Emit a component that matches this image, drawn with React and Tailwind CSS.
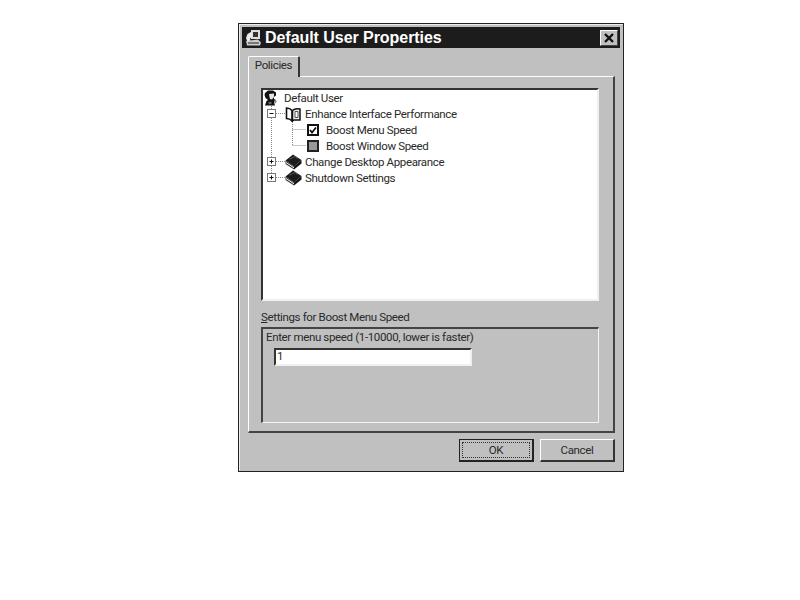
// App.jsx
const DOT = '#8a8a8a';

function UserIcon() {
  return (
    <svg width="15" height="16" viewBox="0 0 15 16" className="shrink-0">
      <path d="M2 3 L5 0.5 L10 0.5 L13 2.5 L13 5.5 L11 7 L11 9 L13 10 L11 12 L12 15.5 L2 15.5 L3.5 11 L5 10 L2.5 8 L1.5 5 Z" fill="#111" />
      <path d="M6 4 L11 3.5 L11 7 L9 9.5 L7 9 L6.5 7 Z" fill="#e4e4e4" />
      <path d="M11.5 10 L14 11 L12.5 13.5 L11 12 Z" fill="#888" />
      <path d="M5 12.5 L8 11.5 L9 13.5 L6 14.5 Z" fill="#666" />
    </svg>
  );
}

function OpenBook() {
  return (
    <svg width="16" height="15" viewBox="0 0 16 15" className="shrink-0">
      <path d="M1.5 1 Q5 1 7 3.5 L7 14 Q5 11.5 1.5 11.5 Z" fill="#fff" stroke="#111" strokeWidth="1.6" />
      <path d="M7.5 3.5 Q10 1 15 2 L15 13 L9 13 L7.5 14 Z" fill="#eee" stroke="#111" strokeWidth="1.5" />
      <path d="M10 4.5 L13 4.5 L13 10.5 L10 10.5 Z" fill="#fff" stroke="#555" strokeWidth="1" />
    </svg>
  );
}

function ClosedBook() {
  return (
    <svg width="17" height="16" viewBox="0 0 17 16" className="shrink-0">
      <path d="M0.5 6.5 L8 0.5 L16.5 6 L9 12.5 Z" fill="#1c1c1c" />
      <path d="M0.5 6.5 L9 12.5 L9 15.5 L0.5 10 Z" fill="#3a3a3a" />
      <path d="M9 12.5 L16.5 6 L16.5 9.5 L9 15.5 Z" fill="#111" />
      <path d="M1 8.5 L9 13.8" stroke="#f0f0f0" strokeWidth="1" />
      <path d="M4.5 5 L10 2.5 L12.5 4.5" stroke="#666" strokeWidth="0.8" fill="none" />
    </svg>
  );
}

function CheckedBox() {
  return (
    <svg width="12" height="12" viewBox="0 0 12 12" className="shrink-0">
      <rect x="1" y="1" width="10" height="10" fill="#fff" stroke="#111" strokeWidth="2" />
      <path d="M3 6 L5 8.5 L9 3.5" fill="none" stroke="#111" strokeWidth="1.8" />
    </svg>
  );
}

function GrayBox() {
  return (
    <svg width="12" height="12" viewBox="0 0 12 12" className="shrink-0">
      <rect x="1" y="1" width="10" height="10" fill="#999" stroke="#222" strokeWidth="2" />
    </svg>
  );
}

function Expander({ open }) {
  return (
    <g>
      <rect x="0.5" y="3.5" width="8" height="8" fill="#fff" stroke="#777" />
      <path d="M2.5 7.5 H6.5" stroke="#111" />
      {!open && <path d="M4.5 5.5 V9.5" stroke="#111" />}
    </g>
  );
}

// connector for the rows that hang off the root
function RootGutter({ open, last }) {
  return (
    <svg width="18" height="16" viewBox="0 0 18 16" className="shrink-0">
      <path d="M4.5 0 V3" stroke={DOT} strokeDasharray="1 1" />
      {!last && <path d="M4.5 12 V16" stroke={DOT} strokeDasharray="1 1" />}
      <path d="M9 7.5 H18" stroke={DOT} strokeDasharray="1 1" />
      <Expander open={open} />
    </svg>
  );
}

// connector for the children of the open book
function ChildGutter({ last }) {
  return (
    <svg width="40" height="16" viewBox="0 0 40 16" className="shrink-0">
      <path d="M4.5 0 V16" stroke={DOT} strokeDasharray="1 1" />
      <path d={last ? 'M25.5 0 V7.5' : 'M25.5 0 V16'} stroke={DOT} strokeDasharray="1 1" />
      <path d="M25.5 7.5 H39" stroke={DOT} strokeDasharray="1 1" />
    </svg>
  );
}

function TitleIcon() {
  return (
    <svg width="17" height="18" viewBox="0 0 17 18" className="shrink-0">
      <path d="M6 1 H15 V10 H6 Z" fill="#ddd" />
      <path d="M8 3 H13 V8 H8 Z" fill="#333" />
      <path d="M2.5 5 L6 3 L7.5 7 L5 9.5 L5.5 12 L2.5 13 L1 9 Z" fill="#eee" />
      <path d="M1 12 L13 10.5 L16 13.5 L15 16.5 L2 16.5 Z" fill="#ccc" />
      <path d="M3 14 H14" stroke="#222" />
    </svg>
  );
}

export default function App() {
  return (
    <div className="min-h-screen bg-white pt-[23px] pl-[238px] font-['Roboto',sans-serif] text-[11.5px] tracking-[-0.35px] text-[#2a2a2a]">
      <div className="w-[386px] h-[449px] border border-[#222]">
        <div className="h-full border border-[#ececec] bg-[#c0c0c0] p-[2px] border-r-[#c0c0c0] border-b-[#c0c0c0]">
          <div className="h-[21px] bg-[#1c1c1c] flex items-center pl-[3px] pr-[2px]">
            <TitleIcon />
            <span className="ml-[3px] text-white font-bold font-['Liberation_Sans',sans-serif] text-[16px] tracking-[-0.05px] leading-none">Default User Properties</span>
            <button className="ml-auto w-[18px] h-[16px] bg-[#c0c0c0] border border-t-white border-l-white border-r-[#444] border-b-[#444] flex items-center justify-center">
              <svg width="10" height="10" viewBox="0 0 10 10">
                <path d="M1 1 L9 9 M9 1 L1 9" stroke="#111" strokeWidth="2.4" />
              </svg>
            </button>
          </div>

          <div className="ml-[6px] mt-[8px] w-[367px]">
            <div className="w-[52px] h-[21px] bg-[#c0c0c0] border-t border-l border-white border-r-2 border-r-[#333] rounded-t-[2px] flex items-center justify-center pb-[2px] relative z-10 -mb-px">
              Policies
            </div>
            <div className="h-[357px] border-t border-l border-white border-r-2 border-b-2 border-r-[#444] border-b-[#444] pt-[11px] pl-[12px]">
              <div className="w-[338px] h-[213px] bg-white border-2 border-t-[#333] border-l-[#333] border-r-[#f0f0f0] border-b-[#f0f0f0]">
                <div className="h-[16px] flex items-center">
                  <UserIcon />
                  <span className="ml-[6px] pt-[2px]">Default User</span>
                </div>
                <div className="h-[16px] flex items-center pl-[4px]">
                  <RootGutter open />
                  <OpenBook />
                  <span className="ml-[4px] pt-[2px]">Enhance Interface Performance</span>
                </div>
                <div className="h-[16px] flex items-center pl-[4px]">
                  <ChildGutter />
                  <CheckedBox />
                  <span className="ml-[7px] pt-[2px]">Boost Menu Speed</span>
                </div>
                <div className="h-[16px] flex items-center pl-[4px]">
                  <ChildGutter last />
                  <GrayBox />
                  <span className="ml-[7px] pt-[2px]">Boost Window Speed</span>
                </div>
                <div className="h-[16px] flex items-center pl-[4px]">
                  <RootGutter />
                  <ClosedBook />
                  <span className="ml-[3px] pt-[2px]">Change Desktop Appearance</span>
                </div>
                <div className="h-[16px] flex items-center pl-[4px]">
                  <RootGutter last />
                  <ClosedBook />
                  <span className="ml-[3px] pt-[2px]">Shutdown Settings</span>
                </div>
              </div>

              <div className="h-[26px] flex items-center pt-[8px]">
                <span><span className="underline">S</span>ettings for Boost Menu Speed</span>
              </div>
              <div className="w-[338px] h-[96px] border-t-2 border-l-2 border-r border-b border-t-[#444] border-l-[#444] border-r-[#f4f4f4] border-b-[#f4f4f4] pl-[3px]">
                <div className="h-[17px] flex items-center">Enter menu speed (1-10000, lower is faster)</div>
                <div className="ml-[8px] mt-[2px] w-[198px] h-[18px] bg-white border-2 border-t-[#333] border-l-[#333] border-r-[#f0f0f0] border-b-[#f0f0f0] flex items-center pl-[1px] leading-none">
                  1
                </div>
              </div>
            </div>

            <div className="flex justify-end gap-[6px] mt-[6px]">
              <button className="w-[75px] h-[23px] bg-[#c0c0c0] border-t border-l border-r-2 border-b-2 border-[#222] flex items-center justify-center p-[2px]">
                <span className="w-full h-full border border-dotted border-[#333] flex items-center justify-center pt-[2px]">OK</span>
              </button>
              <button className="w-[75px] h-[23px] bg-[#c0c0c0] border-t border-l border-r-2 border-b-2 border-t-white border-l-white border-r-[#333] border-b-[#333] flex items-center justify-center pt-[2px]">
                Cancel
              </button>
            </div>
          </div>
        </div>
      </div>
    </div>
  );
}
